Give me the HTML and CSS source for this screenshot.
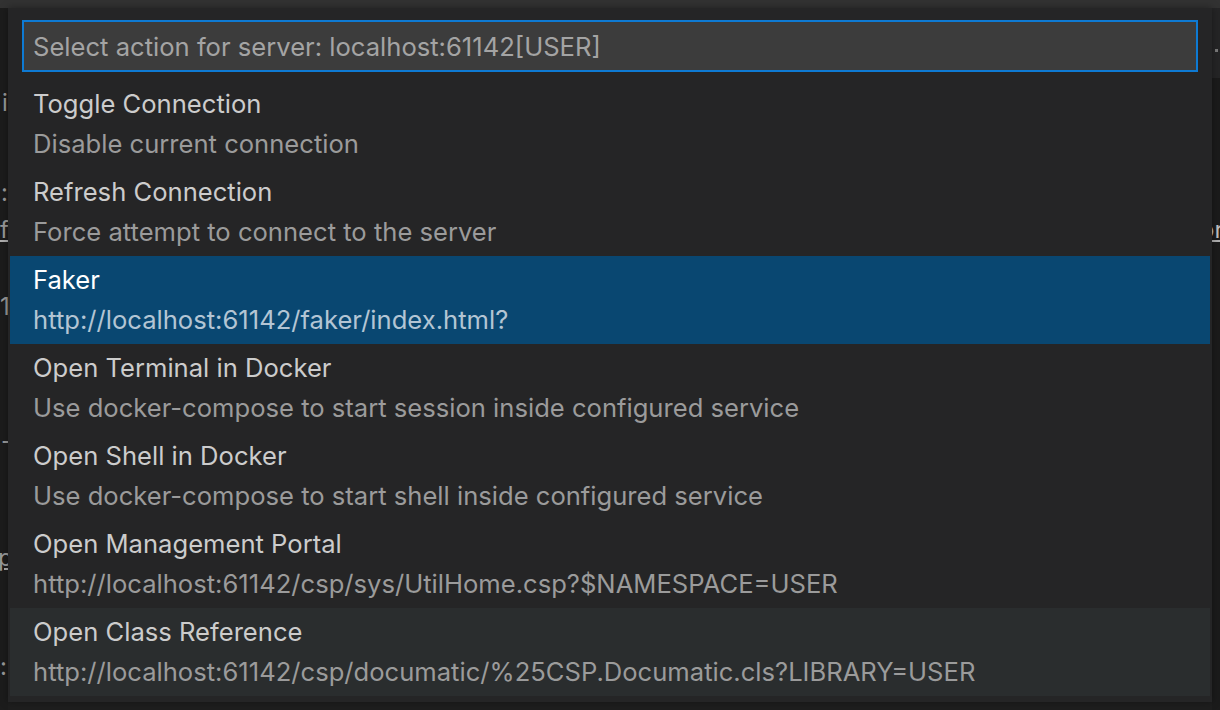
FILE: index.html
```html
<!DOCTYPE html>
<html>
<head>
<meta charset="utf-8">
<link rel="stylesheet" href="styles.css">
</head>
<body>
<div class="editor">
  <div class="topbar"></div>
  <div class="bg-left">
    <span class="frag f1">i</span>
    <span class="frag f2">:</span>
    <span class="frag f3 ul">f</span>
    <span class="frag f4">1</span>
    <span class="frag f5">-</span>
    <span class="frag f6 ul">p</span>
    <span class="frag f7">:</span>
  </div>
  <div class="bg-right">
    <div class="rtop"><span class="dot"></span></div>
    <span class="frag r1 ul">or</span>
  </div>

  <div class="quickpick">
    <div class="inputbox">
      <span class="placeholder">Select action for server: localhost:61142[USER]</span>
    </div>
    <div class="list">
      <div class="item">
        <div class="label">Toggle Connection</div>
        <div class="desc">Disable current connection</div>
      </div>
      <div class="item">
        <div class="label">Refresh Connection</div>
        <div class="desc">Force attempt to connect to the server</div>
      </div>
      <div class="item selected">
        <div class="label">Faker</div>
        <div class="desc">http://localhost:61142/faker/index.html?</div>
      </div>
      <div class="item">
        <div class="label">Open Terminal in Docker</div>
        <div class="desc">Use docker-compose to start session inside configured service</div>
      </div>
      <div class="item">
        <div class="label">Open Shell in Docker</div>
        <div class="desc">Use docker-compose to start shell inside configured service</div>
      </div>
      <div class="item">
        <div class="label">Open Management Portal</div>
        <div class="desc">http://localhost:61142/csp/sys/UtilHome.csp?$NAMESPACE=USER</div>
      </div>
      <div class="item hover">
        <div class="label">Open Class Reference</div>
        <div class="desc">http://localhost:61142/csp/documatic/%25CSP.Documatic.cls?LIBRARY=USER</div>
      </div>
    </div>
  </div>
</div>
</body>
</html>
```
FILE: styles.css
```css
html, body {
  margin: 0;
  padding: 0;
}
body {
  width: 1220px;
  height: 710px;
  overflow: hidden;
  background: #1e1e1e;
  font-family: Inter, "Noto Sans", sans-serif;
}
.editor {
  position: relative;
  width: 1220px;
  height: 710px;
  background: #1e1e1e;
}
.topbar {
  height: 8px;
  background: #323232;
}
.bg-left {
  position: absolute;
  left: 0;
  top: 8px;
  width: 8px;
  height: 702px;
  background: #1c1c1c;
  overflow: hidden;
}
.bg-right {
  position: absolute;
  right: 0;
  top: 8px;
  width: 8px;
  height: 702px;
  background: #1b1b1b;
  overflow: hidden;
}
.rtop {
  height: 70px;
  background: #252526;
  position: relative;
}
.dot {
  position: absolute;
  left: 3px;
  top: 41px;
  width: 3px;
  height: 3px;
  background: #7a7a7a;
}
.frag {
  position: absolute;
  color: #9a9a9a;
  font-size: 24px;
  line-height: 30px;
  white-space: nowrap;
}
.ul {
  text-decoration: underline;
  text-decoration-color: #b0b0b0;
}
.f1 { left: 2px; top: 80px; }
.f2 { left: 1px; top: 170px; }
.f3 { left: 0px; top: 207px; }
.f4 { left: 0px; top: 284px; }
.f5 { left: 1px; top: 418px; }
.f6 { left: -2px; top: 535px; }
.f7 { left: 0px; top: 644px; }
.r1 { left: -12px; top: 207px; color: #c0c0c0; }

.quickpick {
  position: absolute;
  left: 8px;
  top: 8px;
  width: 1204px;
  height: 694px;
  background: #252526;
  box-shadow: 0 0 8px rgba(0, 0, 0, 0.36);
  box-sizing: border-box;
  padding: 12px 2px 6px 2px;
  display: flex;
  flex-direction: column;
}
.inputbox {
  margin: 0 12px;
  height: 52px;
  box-sizing: border-box;
  border: 2px solid #0e7ad3;
  background: #3c3c3c;
  display: flex;
  align-items: center;
  padding-left: 9px;
}
.placeholder {
  color: #a4a4a4;
  font-size: 25.6px;
  white-space: nowrap;
}
.list {
  margin-top: 8px;
  display: flex;
  flex-direction: column;
}
.item {
  height: 88px;
  box-sizing: border-box;
  padding: 4px 0 4px 23px;
  display: flex;
  flex-direction: column;
}
.label {
  height: 40px;
  line-height: 40px;
  font-size: 25.6px;
  color: #cccccc;
  white-space: nowrap;
}
.desc {
  height: 40px;
  line-height: 40px;
  font-size: 25.6px;
  color: #9b9b9b;
  white-space: nowrap;
}
.selected {
  background: #094771;
}
.selected .label {
  color: #ffffff;
}
.selected .desc {
  color: #b3c5d4;
}
.hover {
  background: #2a2d2e;
}
```
